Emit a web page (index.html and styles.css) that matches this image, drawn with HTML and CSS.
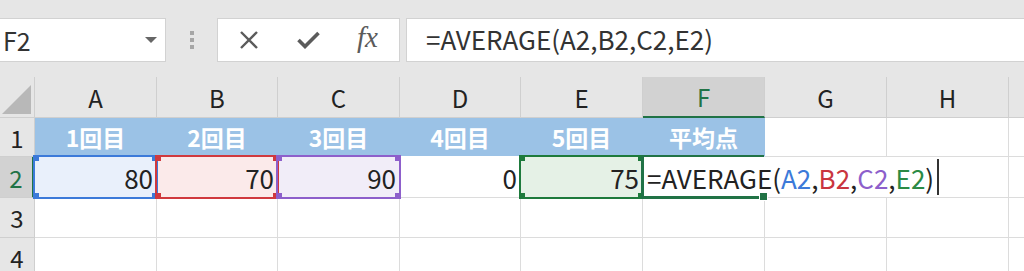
FILE: index.html
```html
<!DOCTYPE html>
<html>
<head lang="ja">
    <meta charset="UTF-8">
    <title>AVERAGE</title>
    <link rel="stylesheet" href="styles.css">
</head>
<body>
<div id="toolbar">
    <div id="namebox">
        <span>F2</span>
        <span class="caret"></span>
    </div>
    <div id="grip"><i></i><i></i><i></i></div>
    <div id="fbuttons">
        <svg class="cancel" width="20" height="18" viewBox="0 0 20 18"><path d="M2 1 L18 17 M18 1 L2 17" stroke="#5b5b5b" stroke-width="2.4" fill="none"/></svg>
        <svg class="enter" width="23" height="18" viewBox="0 0 23 18"><path d="M1.5 9 L8 15.5 L21.5 2" stroke="#5b5b5b" stroke-width="3.6" fill="none"/></svg>
        <span class="fx">fx</span>
    </div>
    <div id="fbar">=AVERAGE(A2,B2,C2,E2)</div>
</div>
<div id="sheet">
    <div class="corner"><span></span></div>
    <div class="colhead">A</div>
    <div class="colhead">B</div>
    <div class="colhead">C</div>
    <div class="colhead">D</div>
    <div class="colhead">E</div>
    <div class="colhead selected">F</div>
    <div class="colhead">G</div>
    <div class="colhead">H</div>
    <div class="colhead"></div>

    <div class="rowhead">1</div>
    <div class="cell title">1回目</div>
    <div class="cell title">2回目</div>
    <div class="cell title">3回目</div>
    <div class="cell title">4回目</div>
    <div class="cell title">5回目</div>
    <div class="cell title">平均点</div>
    <div class="cell"></div>
    <div class="cell"></div>
    <div class="cell"></div>

    <div class="rowhead selected">2</div>
    <div class="cell num ref blue">80</div>
    <div class="cell num ref red">70</div>
    <div class="cell num ref purple">90</div>
    <div class="cell num">0</div>
    <div class="cell num ref green">75</div>
    <div class="cell active"><span class="edit">=AVERAGE(<b class="t-blue">A2</b>,<b class="t-red">B2</b>,<b class="t-purple">C2</b>,<b class="t-green">E2</b>)<i class="cursor"></i></span></div>
    <div class="cell"></div>
    <div class="cell"></div>
    <div class="cell"></div>

    <div class="rowhead">3</div>
    <div class="cell"></div>
    <div class="cell"></div>
    <div class="cell"></div>
    <div class="cell"></div>
    <div class="cell"></div>
    <div class="cell"></div>
    <div class="cell"></div>
    <div class="cell"></div>
    <div class="cell"></div>

    <div class="rowhead">4</div>
    <div class="cell"></div>
    <div class="cell"></div>
    <div class="cell"></div>
    <div class="cell"></div>
    <div class="cell"></div>
    <div class="cell"></div>
    <div class="cell"></div>
    <div class="cell"></div>
    <div class="cell"></div>
</div>
</body>
</html>
```

FILE: styles.css
```css
*{
    margin: 0;
    padding: 0;
    box-sizing: border-box;
}
body{
    width: 1024px;
    height: 271px;
    overflow: hidden;
    background: #ffffff;
    font-family: "Noto Sans CJK JP", "Noto Sans", sans-serif;
    color: #222222;
}
#toolbar{
    height: 77px;
    background: #e6e6e6;
    padding-top: 18px;
    display: flex;
    align-items: flex-start;
}
#namebox{
    width: 166px;
    height: 44px;
    background: #ffffff;
    border: 1px solid #d2d2d2;
    border-left: none;
    display: flex;
    align-items: center;
    justify-content: space-between;
    padding: 0 8px 0 3px;
    font-size: 25px;
    color: #333333;
}
#namebox .caret{
    width: 0;
    height: 0;
    border-left: 6px solid transparent;
    border-right: 6px solid transparent;
    border-top: 6px solid #666666;
}
#grip{
    width: 51px;
    height: 44px;
    display: flex;
    flex-direction: column;
    align-items: center;
    justify-content: center;
    gap: 3px;
}
#grip i{
    width: 4px;
    height: 4px;
    background: #a6a6a6;
}
#fbuttons{
    width: 183px;
    height: 44px;
    background: #ffffff;
    border: 1px solid #d2d2d2;
    display: flex;
    align-items: center;
    padding-left: 21px;
}
#fbuttons .enter{
    margin-left: 38px;
}
#fbuttons .fx{
    margin-left: 37px;
    font-family: "Liberation Serif", serif;
    font-style: italic;
    font-size: 29px;
    color: #5b5b5b;
    margin-top: -5px;
}
#fbar{
    flex: 1;
    height: 44px;
    margin-left: 6px;
    background: #ffffff;
    border: 1px solid #d2d2d2;
    border-right: none;
    padding-left: 19px;
    font-size: 26px;
    line-height: 40px;
    color: #333333;
    white-space: nowrap;
}
#sheet{
    display: grid;
    grid-template-columns: 35px 122px 121px 122px 121px 122px 122px 122px 122px 122px;
    grid-template-rows: 41px 39px 41px 40px 40px;
}
.corner, .colhead, .rowhead{
    background: #e6e6e6;
    border-right: 1px solid #cfcfcf;
    border-bottom: 1px solid #cfcfcf;
    font-size: 24px;
    color: #222222;
    display: flex;
    align-items: center;
    justify-content: center;
}
.corner span{
    width: 0;
    height: 0;
    border-left: 29px solid transparent;
    border-bottom: 29px solid #b8b8b8;
    margin: 4px 0 0 -2px;
}
.colhead.selected{
    background: #d2d2d2;
    color: #217346;
    border-bottom: 2px solid #217346;
}
.rowhead.selected{
    background: #d2d2d2;
    color: #217346;
    border-right: 3px solid #217346;
}
.cell{
    position: relative;
    border-right: 1px solid #dcdcdc;
    border-bottom: 1px solid #dcdcdc;
    font-size: 26px;
    display: flex;
    align-items: center;
    white-space: nowrap;
}
.cell.title{
    background: #9bc2e6;
    border-right-color: #9bc2e6;
    border-bottom-color: #ffffff;
    justify-content: center;
    color: #ffffff;
    font-weight: bold;
    font-size: 23px;
}
.cell.num{
    justify-content: flex-end;
    padding-right: 3px;
    color: #222222;
}
.ref::after{
    content: "";
    position: absolute;
    top: -2px;
    left: -2px;
    right: -2px;
    bottom: -2px;
    border: 2px solid var(--c);
    background:
        linear-gradient(var(--c), var(--c)) top left / 6px 6px no-repeat,
        linear-gradient(var(--c), var(--c)) top right / 6px 6px no-repeat,
        linear-gradient(var(--c), var(--c)) bottom left / 6px 6px no-repeat,
        linear-gradient(var(--c), var(--c)) bottom right / 6px 6px no-repeat;
    background-origin: border-box;
    pointer-events: none;
    z-index: 2;
}
.ref.blue{ --c: #3c7ad9; background: #e9f0fb; }
.ref.red{ --c: #d0393e; background: #fbeaea; }
.ref.purple{ --c: #8d5fcb; background: #f1edf8; }
.ref.green{ --c: #1e7a3c; background: #e5f1e6; }
.cell.active{
    overflow: visible;
    z-index: 3;
}
.cell.active::before{
    content: "";
    position: absolute;
    top: -2px;
    left: -2px;
    right: 0;
    bottom: -2px;
    border-top: 2px solid #217346;
    border-left: 3px solid #217346;
    border-bottom: 3px solid #217346;
    z-index: 4;
}
.cell.active::after{
    content: "";
    position: absolute;
    right: -4px;
    bottom: -4px;
    width: 7px;
    height: 7px;
    background: #217346;
    border: 1px solid #ffffff;
    z-index: 5;
}
.edit{
    position: absolute;
    left: 1px;
    top: 0;
    bottom: 0;
    width: 298px;
    background: #ffffff;
    padding-left: 3px;
    display: flex;
    align-items: center;
    color: #222222;
}
.edit b{
    font-weight: normal;
}
.t-blue{ color: #3c7ad9; }
.t-red{ color: #c9353f; }
.t-purple{ color: #8d5fcb; }
.t-green{ color: #2b8a45; }
.cursor{
    display: inline-block;
    width: 2px;
    height: 36px;
    background: #333333;
    margin-left: 3px;
}
```
